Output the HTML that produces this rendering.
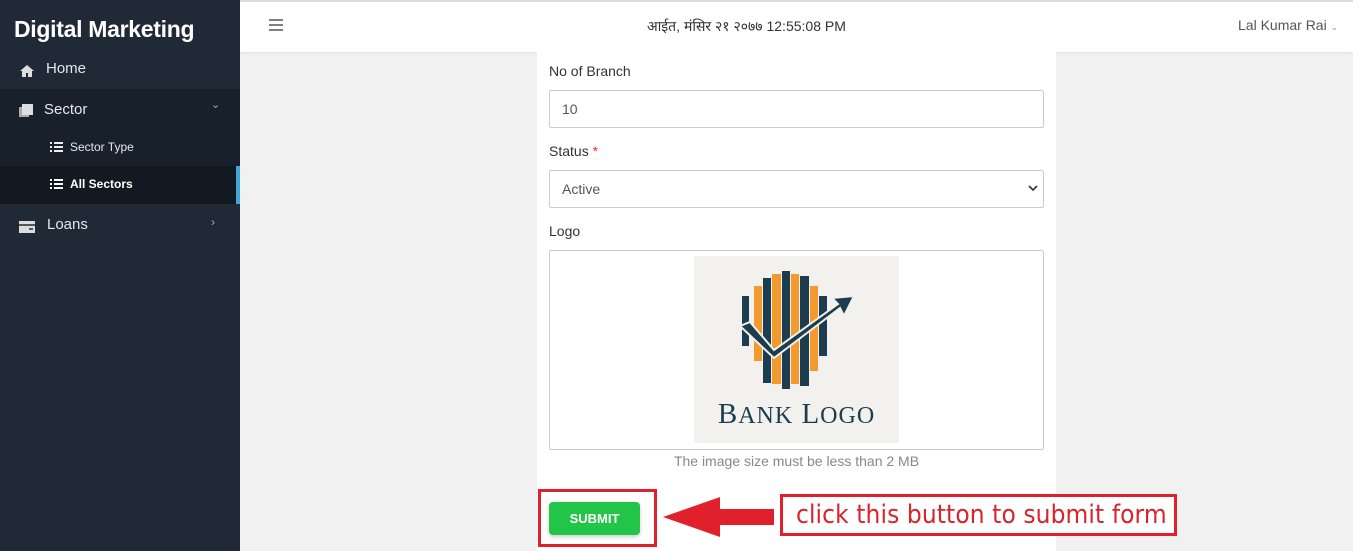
<!DOCTYPE html>
<html><head><meta charset="utf-8"><style>
*{box-sizing:border-box;margin:0;padding:0}
body{width:1353px;height:551px;overflow:hidden;background:#f1f1f1;font-family:"Liberation Sans","Noto Sans CJK SC",sans-serif;position:relative}
.sb{position:absolute;left:0;top:0;width:240px;height:551px;background:#1f2a36;color:#e6e9ec}
.sb .t{position:absolute;left:14px;top:16px;font-size:23px;font-weight:bold;color:#fff;letter-spacing:-0.3px}
.grp{position:absolute;left:0;top:89px;width:240px;height:115px;background:#18212b}
.act{position:absolute;left:0;top:166px;width:240px;height:38px;background:#121920}
.bar{position:absolute;left:236px;top:166px;width:4px;height:38px;background:#3fa4d8}
.it{position:absolute;font-size:15px;color:#e4e7ea}
.hd{position:absolute;left:240px;top:0;width:1113px;height:52px;background:#fff;border-top:2px solid #ddd;box-shadow:0 1px 3px rgba(0,0,0,.08)}
.card{position:absolute;left:537px;top:52px;width:519px;height:499px;background:#fff}
.lb{position:absolute;left:549px;font-size:14px;color:#333}
.in{position:absolute;left:549px;width:495px;height:38px;border:1px solid #ccc;border-radius:2px;font-size:14px;color:#555;padding:10px 12px}
.rb{position:absolute;border:3px solid #e0202a}
</style></head><body>
<div class="sb">
<div class="t">Digital Marketing</div>
<div class="grp"></div><div class="act"></div><div class="bar"></div>
<svg style="position:absolute;left:20px;top:65px" width="14" height="12"><path d="M7 0L0 6h2v6h4V8h2v4h4V6h2z" fill="#ddd"/></svg>
<div class="it" style="left:46px;top:60px">Home</div>
<svg style="position:absolute;left:19px;top:104px" width="15" height="14"><rect x="0" y="3" width="10" height="10" fill="#aaa"/><rect x="3" y="0" width="11" height="11" fill="#ddd"/></svg>
<div class="it" style="left:44px;top:101px">Sector</div>
<div class="it" style="left:211px;top:98px;font-size:11px;color:#aaa">&#x2304;</div>
<svg style="position:absolute;left:50px;top:142px" width="13" height="10"><path d="M0 1h2M4 1h9M0 5h2M4 5h9M0 9h2M4 9h9" stroke="#eee" stroke-width="2"/></svg>
<div class="it" style="left:70px;top:140px;font-size:12px">Sector Type</div>
<svg style="position:absolute;left:50px;top:179px" width="13" height="10"><path d="M0 1h2M4 1h9M0 5h2M4 5h9M0 9h2M4 9h9" stroke="#fff" stroke-width="2"/></svg>
<div class="it" style="left:70px;top:177px;font-size:12px;font-weight:bold;color:#fff">All Sectors</div>
<svg style="position:absolute;left:19px;top:221px" width="16" height="12"><rect width="16" height="12" fill="#ddd"/><rect y="3" width="16" height="2" fill="#555"/><rect x="10" y="7" width="4" height="2" fill="#555"/></svg>
<div class="it" style="left:47px;top:216px">Loans</div>
<div class="it" style="left:211px;top:215px;font-size:12px;color:#aaa">&#x203A;</div>
</div>
<div class="hd">
<svg style="position:absolute;left:29px;top:17px" width="14" height="12"><path d="M0 1h14M0 6h14M0 11h14" stroke="#555" stroke-width="1.5"/></svg>
<div style="position:absolute;left:407px;top:15px;font-size:14px;color:#333">आईत, मंसिर २१ २०७७ 12:55:08 PM</div>
<div style="position:absolute;left:998px;top:15px;font-size:14px;color:#555">Lal Kumar Rai <span style="font-size:9px;color:#999">&#x2304;</span></div>
</div>
<div class="card"></div>
<div class="lb" style="top:63px">No of Branch</div>
<div class="in" style="top:90px">10</div>
<div class="lb" style="top:143px">Status <span style="color:#e33">*</span></div>
<div class="in" style="top:170px">Active<svg style="position:absolute;right:5px;top:14px" width="10" height="7"><path d="M1 1l4 4 4-4" stroke="#333" stroke-width="1.6" fill="none"/></svg></div>
<div class="lb" style="top:223px">Logo</div>
<div class="in" style="top:250px;height:200px"></div>
<div style="position:absolute;left:694px;top:256px;width:205px;height:187px;background:#f3f1ed">
<svg width="205" height="140" viewBox="0 0 205 140">
<g fill="#f29a2e"><rect x="60" y="30" width="8" height="75"/><rect x="78" y="18" width="9" height="110"/><rect x="97" y="18" width="8" height="110"/><rect x="116" y="30" width="8" height="85"/></g>
<g fill="#1b3d4f"><rect x="48" y="40" width="7" height="50"/><rect x="69" y="22" width="8" height="105"/><rect x="88" y="15" width="8" height="118"/><rect x="106" y="20" width="9" height="110"/><rect x="125" y="40" width="8" height="60"/></g>
<path d="M46 70l10-4 24 28 64-46-6-6 22-2-10 20-4-8-66 50z" fill="#1b3d4f" stroke="#f3f1ed" stroke-width="2"/>
</svg>
<div style="position:absolute;left:0;width:205px;top:142px;text-align:center;font-family:'Liberation Serif',serif;font-size:29px;color:#1b3d4f;letter-spacing:1px">B<span style="font-size:24px">ANK</span> L<span style="font-size:24px">OGO</span></div>
</div>
<div style="position:absolute;left:549px;width:495px;top:453px;text-align:center;font-size:14px;color:#888">The image size must be less than 2 MB</div>
<div style="position:absolute;left:549px;top:502px;width:91px;height:33px;background:#22c548;border-radius:4px;box-shadow:0 2px 4px rgba(0,0,0,.2);color:#fff;font-size:13px;font-weight:bold;text-align:center;line-height:33px">SUBMIT</div>
<div class="rb" style="left:538px;top:489px;width:119px;height:58px"></div>
<svg style="position:absolute;left:662px;top:496px" width="112" height="42"><path d="M1 21L58 1v12h54v16H58v12z" fill="#e0202a"/></svg>
<div class="rb" style="left:780px;top:494px;width:397px;height:42px;background:#fff"></div>
<div style="position:absolute;left:796px;top:500px;font-size:26px;color:#d8242c;font-family:'DejaVu Sans Condensed','Liberation Sans',sans-serif;letter-spacing:0.1px">click this button to submit form</div>
</body></html>
